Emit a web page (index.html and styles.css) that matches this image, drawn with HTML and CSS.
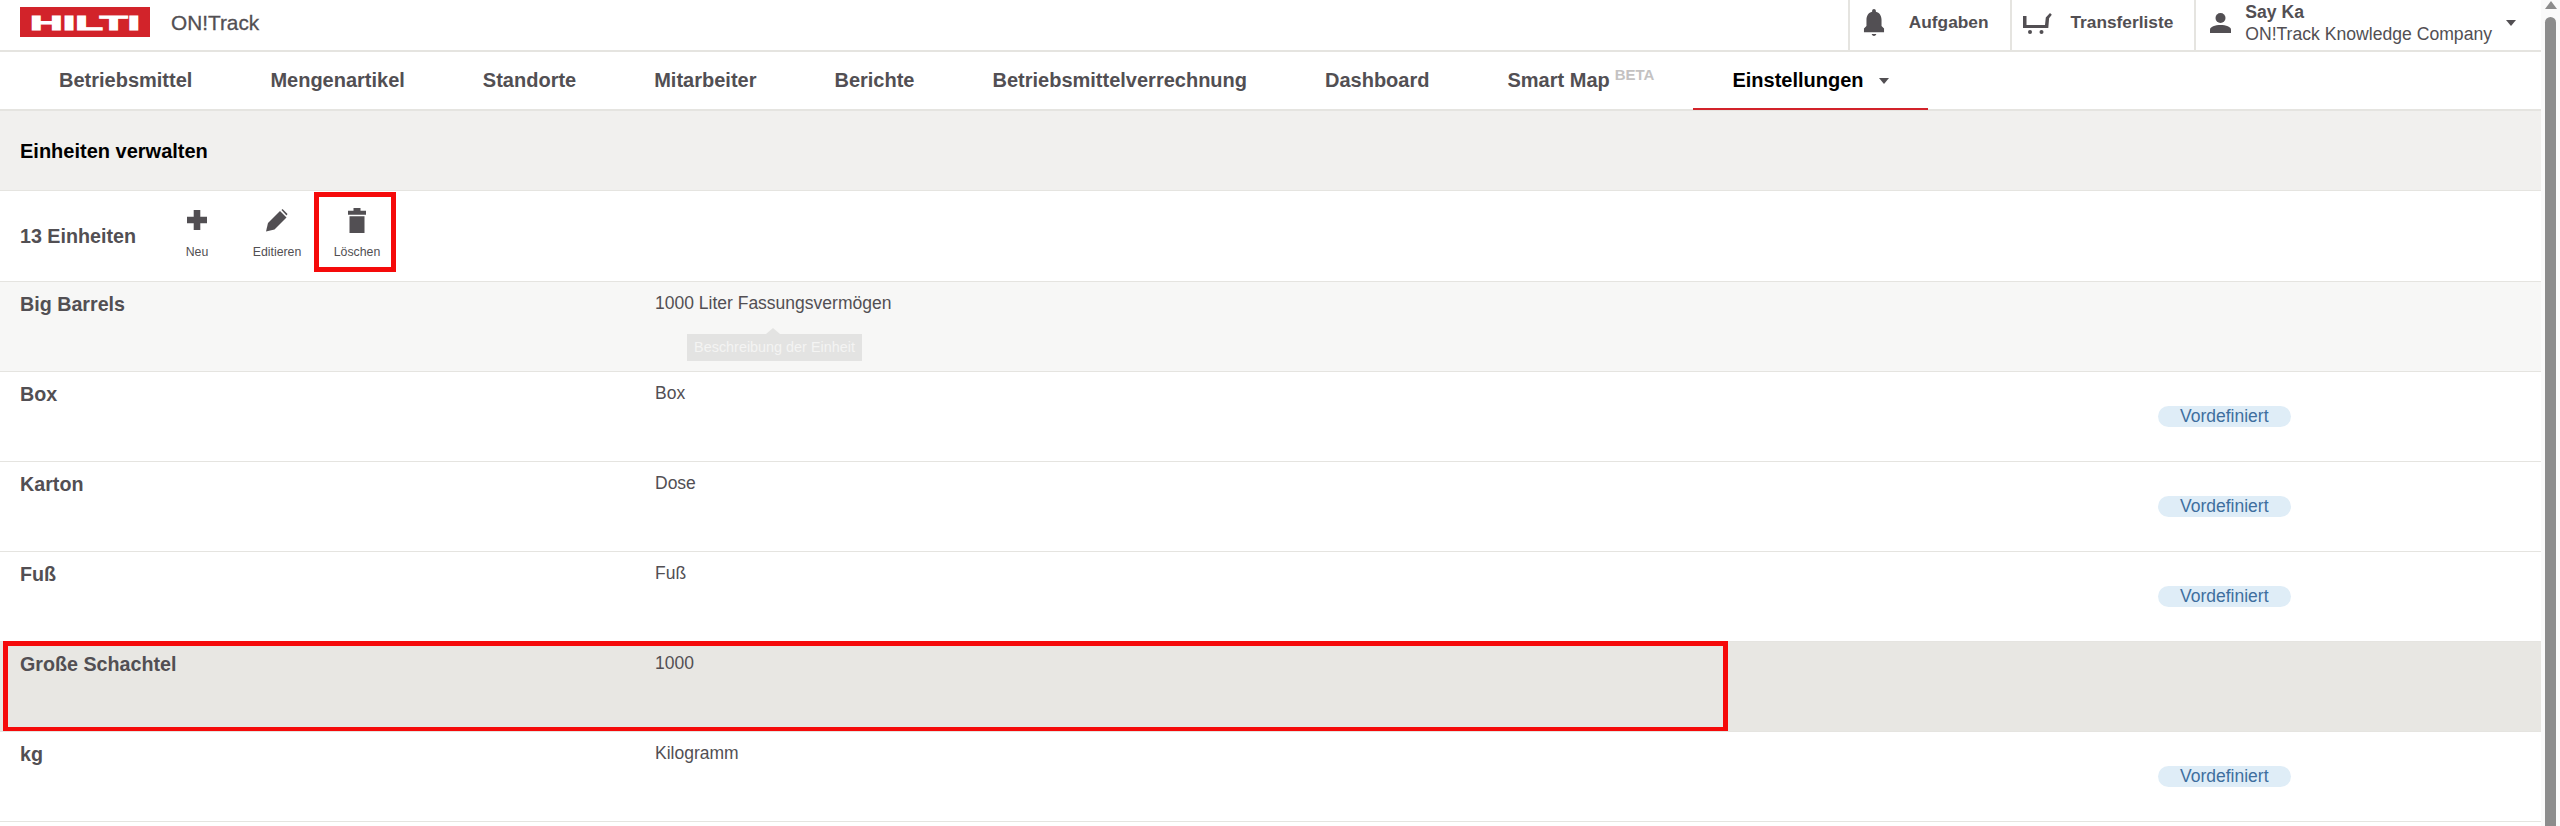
FILE: index.html
```html
<!DOCTYPE html>
<html lang="de">
<head>
    <meta charset="UTF-8">
    <title>ON!Track - Einheiten verwalten</title>
    <link rel="stylesheet" href="styles.css">
</head>
<body>
    <div class="app">
        <div class="main">
            <header class="top-bar">
                <svg class="logo" viewBox="0 0 130 30" role="img" aria-label="Hilti">
                    <rect width="130" height="30" fill="#d2232a"/>
                    <text x="10" y="22.500" textLength="110" lengthAdjust="spacingAndGlyphs" class="logo-text">HILTI</text>
                </svg>
                <span class="product">ON!Track</span>

                <div class="top-item top-item-first">
                    <svg class="bell" viewBox="4 2.5 16 21.5"><path d="M12 24c1 0 1.800-.6 1.800-1.500h-3.600C10.200 23.400 11 24 12 24zm6-8v-5c0-3.070-1.640-5.640-4.500-6.320V4c0-.830-.670-1.500-1.500-1.500s-1.500.670-1.500 1.500v.680C7.630 5.360 6 7.920 6 11v5l-2 2v3h16v-3l-2-2z"/></svg>
                    <span>Aufgaben</span>
                </div>
                <div class="top-item top-item-cart">
                    <svg class="cart" viewBox="0 0 29 22">
                        <path d="M0 4h3.500v9h18.500l.8-7.500L27 1l1.800 1.800-2.700 3.500-.8 9.700H0z"/>
                        <circle cx="7" cy="20" r="2"/>
                        <circle cx="18.500" cy="20" r="2"/>
                    </svg>
                    <span>Transferliste</span>
                </div>
                <div class="top-item top-item-user">
                    <svg class="person" viewBox="0 0 21 20">
                        <circle cx="10.500" cy="5" r="5"/>
                        <path d="M0 20v-3.500c0-2.500 5-4.500 10.500-4.500S21 14 21 16.500V20z"/>
                    </svg>
                    <div class="user-text">
                        <strong>Say Ka</strong>
                        <span>ON!Track Knowledge Company</span>
                    </div>
                    <i class="caret caret-user"></i>
                </div>
            </header>

            <nav class="nav">
                <a class="nav-item">Betriebsmittel</a>
                <a class="nav-item">Mengenartikel</a>
                <a class="nav-item">Standorte</a>
                <a class="nav-item">Mitarbeiter</a>
                <a class="nav-item">Berichte</a>
                <a class="nav-item">Betriebsmittelverrechnung</a>
                <a class="nav-item">Dashboard</a>
                <a class="nav-item">Smart Map<sup class="beta">BETA</sup></a>
                <a class="nav-item active">Einstellungen<i class="caret"></i></a>
            </nav>

            <div class="band">Einheiten verwalten</div>

            <div class="toolbar">
                <div class="count">13 Einheiten</div>
                <div class="tool">
                    <div class="tool-icon">
                        <svg width="20" height="20" viewBox="0 0 20 20"><path d="M6.700 0h6.600v6.700H20v6.600h-6.700V20H6.700v-6.700H0V6.700h6.700z"/></svg>
                    </div>
                    <span>Neu</span>
                </div>
                <div class="tool">
                    <div class="tool-icon">
                        <svg width="22" height="23" viewBox="0 0 22 23"><path d="M0 22.500l2-8.500L14 2l6.500 6.500L8.500 20.500z"/><path d="M15.500 1L16.500 0l5 5-1 1.500z"/></svg>
                    </div>
                    <span>Editieren</span>
                </div>
                <div class="tool tool-delete">
                    <div class="tool-icon">
                        <svg width="18" height="25" viewBox="0 0 18 25"><path d="M5.500 0h7v2.700H18v4H0v-4h5.500zM1.500 8.300h15V25h-15z"/></svg>
                    </div>
                    <span>Löschen</span>
                    <div class="mark mark-delete"></div>
                </div>
            </div>

            <div class="rows">
                <div class="row row-hover">
                    <div class="row-name">Big Barrels</div>
                    <div class="row-desc">1000 Liter Fassungsvermögen</div>
                    <div class="tooltip">Beschreibung der Einheit</div>
                </div>
                <div class="row">
                    <div class="row-name">Box</div>
                    <div class="row-desc">Box</div>
                    <div class="pill">Vordefiniert</div>
                </div>
                <div class="row">
                    <div class="row-name">Karton</div>
                    <div class="row-desc">Dose</div>
                    <div class="pill">Vordefiniert</div>
                </div>
                <div class="row">
                    <div class="row-name">Fuß</div>
                    <div class="row-desc">Fuß</div>
                    <div class="pill">Vordefiniert</div>
                </div>
                <div class="row row-selected">
                    <div class="row-name">Große Schachtel</div>
                    <div class="row-desc">1000</div>
                    <div class="mark mark-row"></div>
                </div>
                <div class="row">
                    <div class="row-name">kg</div>
                    <div class="row-desc">Kilogramm</div>
                    <div class="pill">Vordefiniert</div>
                </div>
            </div>
        </div>

        <div class="scrollbar">
            <div class="scroll-arrow"></div>
            <div class="scroll-thumb"></div>
        </div>
    </div>
</body>
</html>
```

FILE: styles.css
```css
* {
    box-sizing: border-box;
}
body {
    margin: 0;
    height: 826px;
    overflow: hidden;
    background: white;
    color: #524f53;
    font-family: "Liberation Sans", Arial, sans-serif;
}
svg {
    display: block;
    fill: #524f53;
    flex: none;
}
.app {
    display: flex;
    height: 826px;
}
.main {
    flex: 1;
    min-width: 0;
}

/* top bar */
.top-bar {
    display: flex;
    height: 52px;
    border-bottom: 2px solid #e5e4e0;
    padding-left: 20px;
}
.logo {
    width: 130px;
    height: 30px;
    margin-top: 7px;
}
.logo-text {
    fill: white;
    font-family: "Liberation Sans", Arial, sans-serif;
    font-size: 21px;
    font-weight: bold;
    stroke: white;
    stroke-width: 1.100px;
}
.product {
    margin-left: 21px;
    margin-top: -2px;
    font-size: 20.800px;
    line-height: 50px;
    -webkit-text-stroke: 0.3px #524f53;
}
.top-item {
    display: flex;
    align-items: center;
    padding-bottom: 5px;
    border-left: 2px solid #e5e4e0;
    font-size: 17.300px;
    font-weight: bold;
}
.top-item-first {
    margin-left: auto;
    gap: 24px;
    padding-left: 13px;
    padding-right: 22px;
}
.top-item-cart {
    gap: 18px;
    padding-left: 11px;
    padding-right: 21px;
}
.top-item-user {
    gap: 14px;
    padding-left: 14px;
    padding-right: 25px;
    font-size: 17.600px;
    font-weight: normal;
}
.bell {
    width: 22px;
    height: 27px;
}
.cart {
    width: 29px;
    height: 22px;
}
.person {
    width: 21px;
    height: 20px;
}
.user-text {
    display: flex;
    flex-direction: column;
    line-height: 22px;
}
.caret {
    display: inline-block;
    width: 0;
    height: 0;
    border-left: 5px solid transparent;
    border-right: 5px solid transparent;
    border-top: 6px solid #524f53;
    margin-left: 15px;
    vertical-align: 3px;
}
.caret-user {
    margin-left: 0;
}

/* main navigation */
.nav {
    display: flex;
    height: 59px;
    padding-left: 20px;
    border-bottom: 2px solid #e5e4e0;
}
.nav-item {
    position: relative;
    padding: 0 39px;
    font-size: 20px;
    font-weight: bold;
    line-height: 57px;
    white-space: nowrap;
}
.nav-item.active {
    color: black;
}
.nav-item.active::after {
    content: "";
    position: absolute;
    left: 0;
    right: 0;
    bottom: -1px;
    height: 2px;
    background: #d2232a;
}
.beta {
    margin-left: 5px;
    color: #c4c2c2;
    font-size: 15px;
    line-height: 0;
    vertical-align: 7px;
}

.band {
    height: 79px;
    padding-left: 20px;
    background: #f1f0ee;
    color: black;
    font-size: 20px;
    font-weight: bold;
    line-height: 80px;
}

/* toolbar */
.toolbar {
    display: flex;
    height: 91px;
    padding-left: 20px;
    border-top: 1px solid #e5e4e0;
}
.count {
    width: 137px;
    font-size: 19.700px;
    font-weight: bold;
    line-height: 90px;
}
.tool {
    position: relative;
    display: flex;
    flex-direction: column;
    align-items: center;
    width: 80px;
    padding-top: 16px;
    font-size: 12.300px;
}
.tool-icon {
    display: flex;
    align-items: center;
    justify-content: center;
    height: 26px;
    margin-bottom: 12px;
}

/* unit rows */
.rows {
    border-bottom: 1px solid #e5e4e0;
}
.row {
    position: relative;
    display: grid;
    grid-template-columns: 635px 1503px auto;
    height: 90px;
    padding-left: 20px;
    padding-top: 12px;
    border-top: 1px solid #e5e4e0;
}
.row-hover {
    background: #f7f7f6;
}
.row-selected {
    background: #e8e7e3;
}
.row-name {
    font-size: 19.700px;
    font-weight: bold;
    line-height: 20px;
}
.row-desc {
    font-size: 17.500px;
    line-height: 18px;
}
.pill {
    justify-self: start;
    height: 21px;
    margin-top: 22px;
    padding: 0 22px;
    border-radius: 11px;
    background: #dfedf7;
    color: #3e6f9f;
    font-size: 17.500px;
    line-height: 20px;
}

/* tooltip and red marks lie over the content */
.tooltip {
    position: absolute;
    left: 687px;
    top: 52px;
    width: 175px;
    height: 27px;
    background: #e3e3e2;
    color: #f4f4f3;
    font-size: 14.400px;
    line-height: 27px;
    text-align: center;
}
.tooltip::before {
    content: "";
    position: absolute;
    left: 79px;
    top: -6px;
    border-left: 7px solid transparent;
    border-right: 7px solid transparent;
    border-bottom: 6px solid #e3e3e2;
}
.mark {
    position: absolute;
    border: 5px solid #f50a0a;
}
.mark-delete {
    left: -3px;
    top: 1px;
    width: 82px;
    height: 80px;
}
.mark-row {
    left: 3px;
    top: -1px;
    width: 1725px;
    height: 91px;
}

/* scrollbar */
.scrollbar {
    display: flex;
    flex-direction: column;
    align-items: center;
    width: 19px;
    padding: 1px 0 0;
    background: #fafafa;
}
.scroll-arrow {
    width: 0;
    height: 0;
    border-left: 6.500px solid transparent;
    border-right: 6.500px solid transparent;
    border-bottom: 8px solid #8c8c8c;
    margin-bottom: 8px;
}
.scroll-thumb {
    flex: 1;
    width: 11px;
    border-radius: 6px 6px 0 0;
    background: #8c8c8c;
}
```
